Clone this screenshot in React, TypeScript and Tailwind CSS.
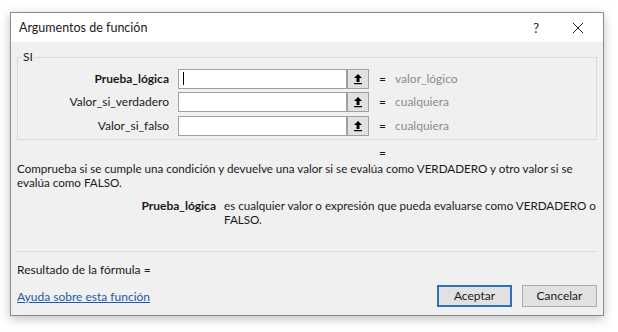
import React from "react";

const ArrowBtn = () => (
  <div className="w-[22px] h-[20px] border border-[#a0a0a0] bg-[#e1e1e1] flex items-center justify-center">
    <svg width="10" height="12" viewBox="0 0 10 12">
      <path d="M5 1 L9 5 L6.5 5 L6.5 9 L3.5 9 L3.5 5 L1 5 Z" fill="#000" />
      <rect x="1" y="10" width="8" height="1.2" fill="#000" />
    </svg>
  </div>
);

const Row = ({ label, value, bold, caret }: { label: string; value: string; bold?: boolean; caret?: boolean }) => (
  <div className="flex items-center h-[23.5px]">
    <div className={`w-[151px] text-right pr-0 ${bold ? "font-bold" : ""}`}>{label}</div>
    <div className="ml-[9px] w-[169px] h-[20px] border border-[#a0a0a0] bg-white flex items-center pl-[4px]">
      {caret && <div className="w-px h-[13px] bg-black" />}
    </div>
    <ArrowBtn />
    <div className="ml-[10px]">=</div>
    <div className="ml-[9px] text-[#8c8c8c]">{value}</div>
  </div>
);

export default function App() {
  return (
    <div
      className="w-[618px] h-[332px] bg-white pt-[12px] pl-[10px] text-[12px] text-[#1a1a1a] leading-[14px]"
      style={{ fontFamily: 'Lato, "Liberation Sans", Arial, sans-serif' }}
    >
      <div className="w-[594px] h-[304px] border border-[#8a8a8a] shadow-[0_3px_10px_rgba(0,0,0,0.25)] bg-[#f0f0f0] flex flex-col">
        <div className="h-[29px] bg-white flex items-center pl-[8px] pr-[19px] shrink-0">
          <div className="text-[12.5px]">Argumentos de función</div>
          <div className="ml-auto text-[13px] mr-[33px]">?</div>
          <svg width="12" height="12" viewBox="0 0 12 12">
            <path d="M1 1 L11 11 M11 1 L1 11" stroke="#222" strokeWidth="1" />
          </svg>
        </div>
        <div className="px-[6px] flex flex-col">
          <fieldset className="mt-[8px] border border-[#dadada] h-[90px] px-[0px]">
            <legend className="ml-[4px] px-[1px] leading-[14px]">SI</legend>
            <div className="mt-[3px] flex flex-col">
              <Row label="Prueba_lógica" value="valor_lógico" bold caret />
              <Row label="Valor_si_verdadero" value="cualquiera" />
              <Row label="Valor_si_falso" value="cualquiera" />
            </div>
          </fieldset>
          <div className="mt-[6px] pl-[362px]">=</div>
          <div className="mt-[2px] text-[11.65px]">
            <div className="whitespace-nowrap">
              Comprueba si se cumple una condición y devuelve una valor si se evalúa como VERDADERO y otro valor si se
            </div>
            <div>evalúa como FALSO.</div>
          </div>
          <div className="mt-[9px] flex">
            <div className="w-[199px] text-right font-bold shrink-0">Prueba_lógica</div>
            <div className="ml-[8px] w-[380px] text-[11.65px]">
              <div className="whitespace-nowrap">es cualquier valor o expresión que pueda evaluarse como VERDADERO o</div>
              <div>FALSO.</div>
            </div>
          </div>
          <div className="mt-[24px] h-px bg-[#dcdcdc]" />
          <div className="mt-[11px]">Resultado de la fórmula =</div>
          <div className="mt-[8px] flex items-start">
            <a className="mt-[5px] text-[#1c5aa6] underline">Ayuda sobre esta función</a>
            <button className="ml-auto w-[75px] h-[22px] border-2 border-[#2b73bd] bg-[#e1e1e1]">Aceptar</button>
            <button className="ml-[10px] w-[75px] h-[22px] border border-[#adadad] bg-[#e1e1e1]">Cancelar</button>
          </div>
        </div>
      </div>
    </div>
  );
}
